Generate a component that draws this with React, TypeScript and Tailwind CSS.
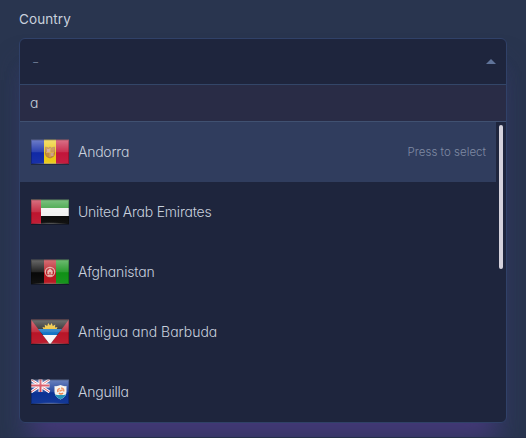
import type { ReactNode } from 'react';

function Flag({ id, children }: { id: string; children: ReactNode }) {
  return (
    <svg className="h-[30px] w-10 shrink-0" viewBox="0 -0.5 40 30">
      <defs>
        <linearGradient id={`${id}-gloss`} x1="0" y1="0" x2="0" y2="1">
          <stop offset="0" stopColor="#fff" stopOpacity=".4" />
          <stop offset=".5" stopColor="#fff" stopOpacity=".12" />
          <stop offset=".54" stopColor="#fff" stopOpacity="0" />
          <stop offset="1" stopColor="#fff" stopOpacity=".04" />
        </linearGradient>
        <radialGradient id={`${id}-shine`} cx=".5" cy="1" r=".5" gradientTransform="translate(0 .86) scale(1 .14)">
          <stop offset="0" stopColor="#fff" stopOpacity=".5" />
          <stop offset="1" stopColor="#fff" stopOpacity="0" />
        </radialGradient>
        <clipPath id={`${id}-clip`}>
          <rect x="1" y="2" width="38" height="24.5" />
        </clipPath>
      </defs>
      <rect x="1" y="2" width="38" height="25.5" fill="#000" opacity=".3" />
      <g clipPath={`url(#${id}-clip)`}>{children}</g>
      <rect x="1" y="2" width="38" height="24.5" fill={`url(#${id}-gloss)`} />
      <rect x="1" y="2" width="38" height="24.5" fill={`url(#${id}-shine)`} />
      <rect x="1.5" y="2.5" width="37" height="23.5" fill="none" stroke="#000" strokeOpacity=".22" />
    </svg>
  );
}

const Andorra = () => (
  <Flag id="ad">
    <path fill="#1029a5" d="M1 2h13v25H1z" />
    <path fill="#eac813" d="M14 2h12v25H14z" />
    <path fill="#c2153a" d="M26 2h13v25H26z" />
    <path fill="#c48a40" stroke="#b0763f" strokeWidth=".8" d="M15.500 9.500l3 1 1.500-1 1.500 1 3-1v7q0 3-4.500 4-4.500-1-4.500-4z" />
    <path fill="#cfa08a" d="M17 11.500h3v3.500h-3zM20.500 15.500h3v3h-3z" />
    <path stroke="#dbb453" strokeWidth=".8" d="M20 10.500v9M16 15h8" />
  </Flag>
);

const Emirates = () => (
  <Flag id="ae">
    <path fill="#28992f" d="M1 2h38v8.500H1z" />
    <path fill="#f1f1f1" d="M1 10.500h38v8H1z" />
    <path fill="#090909" d="M1 18.500h38V27H1z" />
    <path fill="#bd152f" d="M1 2h10v25H1z" />
  </Flag>
);

const Afghanistan = () => (
  <Flag id="af">
    <path fill="#080808" d="M1 2h13v25H1z" />
    <path fill="#b8141d" d="M14 2h12v25H14z" />
    <path fill="#109016" d="M26 2h13v25H26z" />
    <circle cx="20" cy="14.500" r="4.700" fill="none" stroke="#dfa39c" strokeWidth="1.300" />
    <path fill="#e6b4ac" d="M17.300 16.500v-3l2.700-2.500 2.700 2.500v3zM17.500 17h5v1.500h-5z" />
    <path fill="#c4141d" d="M19.500 14.500h1v2h-1z" />
  </Flag>
);

const Antigua = () => (
  <Flag id="ag">
    <path fill="#b81527" d="M1 2h38v25H1z" />
    <path fill="#151515" d="M1 2h38L20 27z" />
    <path fill="#eebd24" d="M13.500 12l-1-2.500 2.500.5-.3-3 2.500 1.500 1-3L20 8l1.800-2.500 1 3L25.300 7l-.3 3 2.500-.5-1 2.500z" />
    <path fill="#1475c4" d="M8 11.500h24l-5 6H13z" />
    <path fill="#f6f6f6" d="M12.700 17.500h14.600L20 27z" />
  </Flag>
);

const Anguilla = () => (
  <Flag id="ai">
    <path fill="#0b3193" d="M1 2h38v25H1z" />
    <path stroke="#fff" strokeWidth="2.800" d="M1 2l18.500 12.500M19.500 2L1 14.500" />
    <path stroke="#d64050" strokeWidth="1" d="M1 2l18.500 12.500M19.500 2L1 14.500" />
    <path stroke="#fff" strokeWidth="4" d="M10.500 1v13.500M1 8h18.500" />
    <path stroke="#cd293d" strokeWidth="2" d="M10.500 1v13.500M1 8h18.500" />
    <path fill="#f4f1eb" d="M24.500 8.500q3 .5 6-1 3 1.500 6 1v6q0 5-6 7.500-6-2.500-6-7.500z" />
    <path fill="#2390b7" d="M24.700 17q6 1 11.600 0-1.500 3.300-5.800 5-4.300-1.700-5.800-5z" />
    <path fill="none" stroke="#ee8149" strokeWidth="1.600" d="M28 14.500q-1-3 2-3.500M31 10.500q3.500.5 2.500 3.500M33 15.500q-2 2-4 0M29.500 13.500l3-1" />
  </Flag>
);

const countries = [
  { name: 'Andorra', flag: <Andorra />, tracking: 'tracking-[-0.24px]' },
  { name: 'United Arab Emirates', flag: <Emirates />, tracking: 'tracking-[-0.22px]' },
  { name: 'Afghanistan', flag: <Afghanistan />, tracking: 'tracking-[-0.18px]' },
  { name: 'Antigua and Barbuda', flag: <Antigua />, tracking: 'tracking-[-0.01px]' },
  { name: 'Anguilla', flag: <Anguilla />, tracking: 'tracking-[-0.22px]' },
];

export default function App() {
  return (
    <main className="h-[438px] w-[526px] overflow-hidden border-b border-[#25304a] bg-[#29354f] px-[19px] pt-[9px] font-['Inter',sans-serif] text-sm font-light text-[#c8d0dd] [font-feature-settings:'cv11']">
      <label className="block h-[29px] text-[13.5px] leading-[21px] font-normal tracking-[0.1px]">Country</label>
      <section className="flex h-[385px] w-[488px] flex-col overflow-hidden rounded-[6px] border border-[#304168] bg-[#1e253d] shadow-[0_28px_24px_-14px_#453979,0_22px_22px_#30386480]">
        <div className="flex h-[46px] shrink-0 items-center justify-between border-b border-[#334668] pr-2.5 pl-3">
          <span className="w-[7px] pb-0.5 text-base text-[#68758d]">-</span>
          <svg className="h-[5px] w-[10px]" viewBox="0 0 10 5"><path d="M0 5L5 0l5 5z" fill="#60749a" /></svg>
        </div>
        <div className="flex h-[37px] shrink-0 items-center border-b border-[#405171] bg-[#292c46] pl-2.5">a</div>
        <div className="flex min-h-0 flex-1">
          <ul className="w-[476px]">
            {countries.map((country, index) => (
              <li key={country.name} className={`flex h-[60px] items-center px-2.5 ${index === 0 ? 'bg-[#303d5e]' : ''}`}>
                {country.flag}
                <span className={`ml-2 whitespace-nowrap ${country.tracking}`}>{country.name}</span>
                {index === 0 && <span className="ml-auto pt-px text-[11.5px] tracking-[0.02px] whitespace-nowrap text-[#7f8aa3]">Press to select</span>}
              </li>
            ))}
          </ul>
          <div className="mt-[3px] ml-[3px] h-36 w-1 rounded-full bg-[#d5d2dc]" />
        </div>
      </section>
    </main>
  );
}
